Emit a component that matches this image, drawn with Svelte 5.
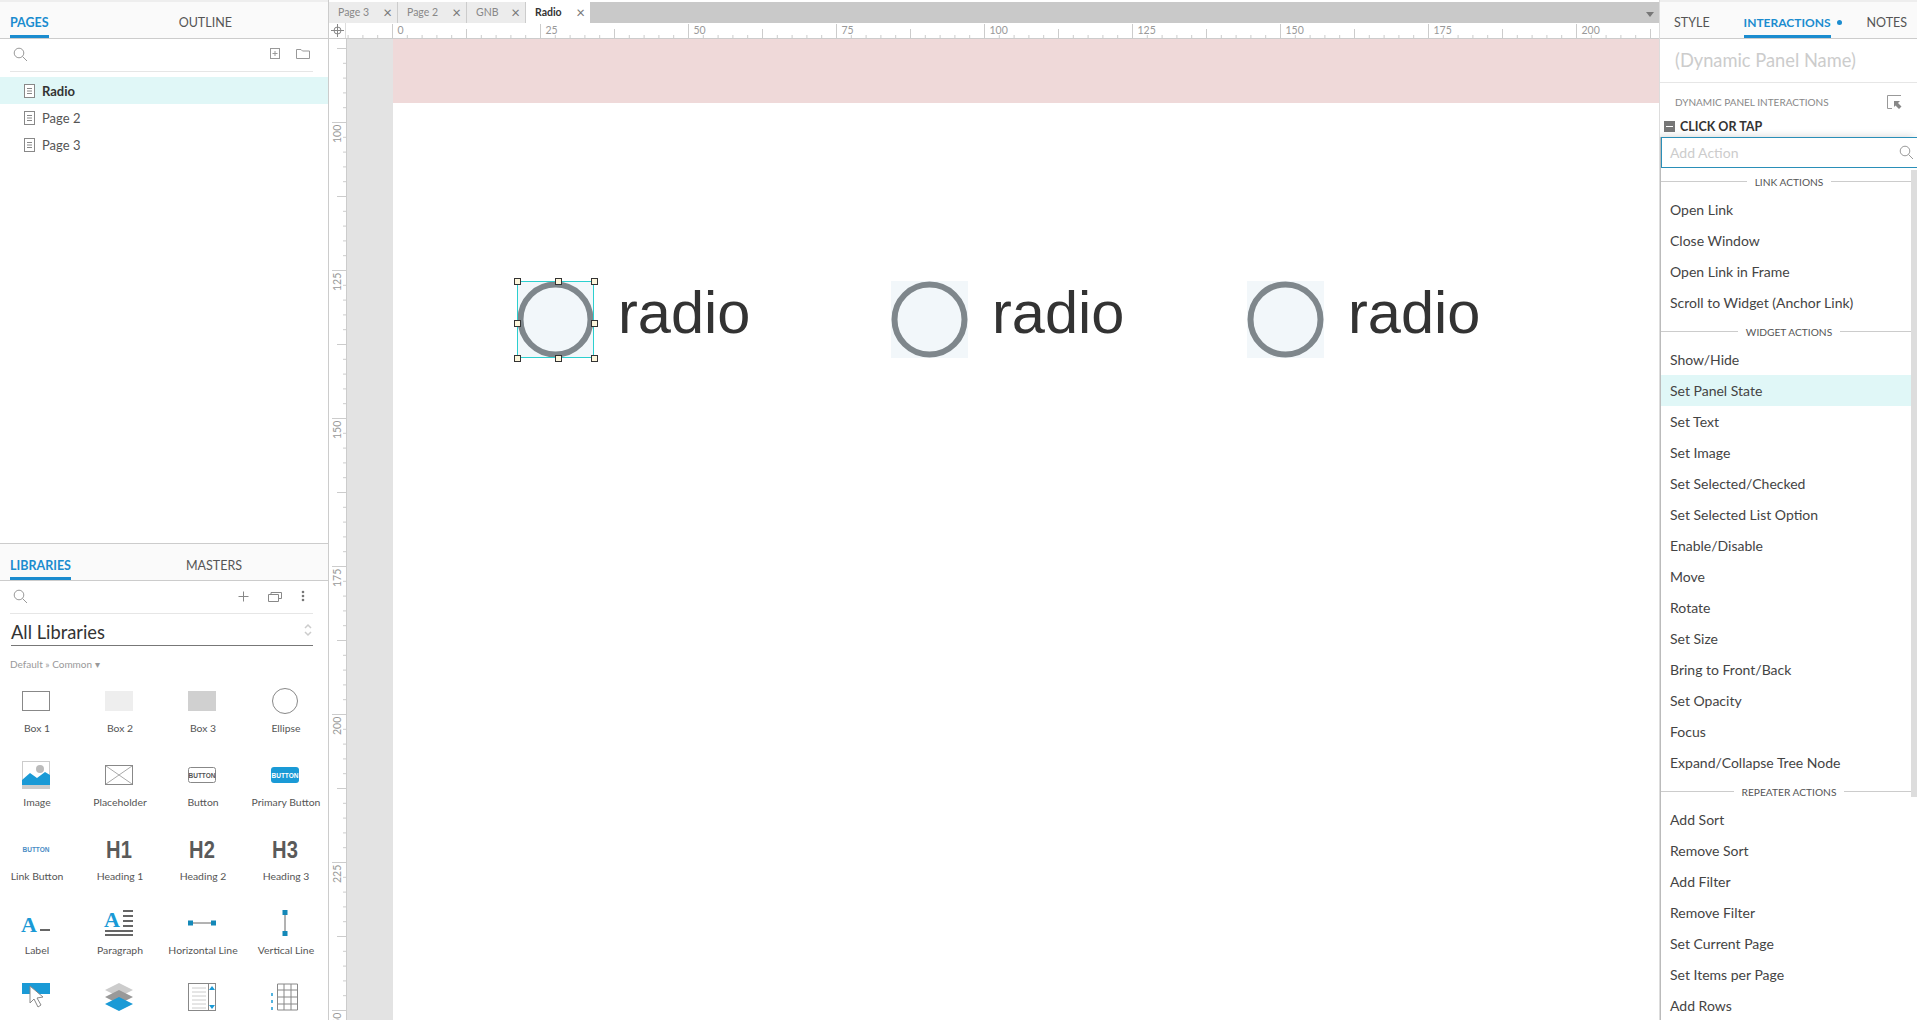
<script>
    const pages = ['Radio', 'Page 2', 'Page 3'];
    const docTabs = [
        { name: 'Page 3', width: 69 },
        { name: 'Page 2', width: 69 },
        { name: 'GNB', width: 59 },
        { name: 'Radio', width: 64, active: true }
    ];

    const widgets = [
        { left: 124, selected: true },
        { left: 498 },
        { left: 854 }
    ];
    const handles = [
        [0, 0], [53, 0], [100, 0],
        [0, 55], [100, 55],
        [0, 100], [53, 100], [100, 100]
    ];

    // last row sits under the fold, its captions are not visible
    const library = [
        ['box1', 'Box 1'], ['box2', 'Box 2'], ['box3', 'Box 3'], ['ellipse', 'Ellipse'],
        ['image', 'Image'], ['placeholder', 'Placeholder'], ['button', 'Button'], ['primary', 'Primary Button'],
        ['link', 'Link Button'], ['h1', 'Heading 1'], ['h2', 'Heading 2'], ['h3', 'Heading 3'],
        ['label', 'Label'], ['paragraph', 'Paragraph'], ['hline', 'Horizontal Line'], ['vline', 'Vertical Line'],
        ['hotspot', ''], ['panel', ''], ['frame', ''], ['repeater', '']
    ];

    const actions = [
        { title: 'LINK ACTIONS', items: ['Open Link', 'Close Window', 'Open Link in Frame', 'Scroll to Widget (Anchor Link)'] },
        { title: 'WIDGET ACTIONS', items: ['Show/Hide', 'Set Panel State', 'Set Text', 'Set Image', 'Set Selected/Checked', 'Set Selected List Option', 'Enable/Disable', 'Move', 'Rotate', 'Set Size', 'Bring to Front/Back', 'Set Opacity', 'Focus', 'Expand/Collapse Tree Node'] },
        { title: 'REPEATER ACTIONS', items: ['Add Sort', 'Remove Sort', 'Add Filter', 'Remove Filter', 'Set Current Page', 'Set Items per Page', 'Add Rows'] }
    ];

    // ruler: 148px per 25 units, one tick every 2.5 units
    const step = 14.8;
    const hTicks = Array.from({ length: 92 }, (_, i) => i - 3);
    const vTicks = Array.from({ length: 70 }, (_, i) => i - 5);
    const tickLen = (i) => (i % 10 === 0 ? 14 : i % 5 === 0 ? 9 : 3);
</script>

{#snippet search()}
    <svg class="search" width="15" height="15" viewBox="0 0 15 15">
        <circle cx="6" cy="6" r="4.8" fill="none" stroke="#999" />
        <path d="M9.5 9.5 L14 14" stroke="#999" fill="none" />
    </svg>
{/snippet}

{#snippet pageIcon()}
    <svg width="11" height="14" viewBox="0 0 11 14">
        <rect x="0.5" y="0.5" width="10" height="13" fill="#fff" stroke="#888" />
        <path d="M3 4.5 H8 M3 7 H8 M3 9.5 H8" stroke="#888" />
    </svg>
{/snippet}

{#snippet widgetIcon(kind)}
    <svg width="44" height="34" viewBox="0 0 44 34">
        {#if kind === 'box1'}
            <rect x="7.5" y="7.5" width="27" height="19" fill="#fff" stroke="#888" />
        {:else if kind === 'box2'}
            <rect x="7" y="7" width="28" height="20" fill="#eee" />
        {:else if kind === 'box3'}
            <rect x="7" y="7" width="28" height="20" fill="#d0d0d0" />
        {:else if kind === 'ellipse'}
            <circle cx="21" cy="17" r="12.5" fill="#fff" stroke="#888" />
        {:else if kind === 'image'}
            <rect x="7.5" y="3.5" width="27" height="27" fill="#fff" stroke="#ccc" />
            <circle cx="25" cy="11" r="4" fill="#bbb" />
            <path d="M7 22 L15 15 L22 20 L30 14 L35 17 V27 H7 Z" fill="#1a9ad6" />
            <rect x="7" y="27" width="28" height="4" fill="#ccc" />
        {:else if kind === 'placeholder'}
            <rect x="7.5" y="7.5" width="27" height="19" fill="#fff" stroke="#888" />
            <path d="M8 8 L34 26 M34 8 L8 26" stroke="#aaa" />
        {:else if kind === 'button'}
            <rect x="7.5" y="9.5" width="27" height="15" rx="2" fill="#fff" stroke="#888" />
            <text x="21" y="19.5" text-anchor="middle" class="btn-text" fill="#555">BUTTON</text>
        {:else if kind === 'primary'}
            <rect x="7" y="9" width="28" height="16" rx="3" fill="#1a9ad6" />
            <text x="21" y="19.5" text-anchor="middle" class="btn-text" fill="#fff">BUTTON</text>
        {:else if kind === 'link'}
            <text x="21" y="19.5" text-anchor="middle" class="btn-text" fill="#4a8cc4">BUTTON</text>
        {:else if kind === 'h1' || kind === 'h2' || kind === 'h3'}
            <text transform="translate(21,26) scale(0.84,1)" text-anchor="middle" class="heading">{kind.toUpperCase()}</text>
        {:else if kind === 'label'}
            <text x="6" y="26" class="serif-a">A</text>
            <rect x="25" y="23" width="10" height="2" fill="#666" />
        {:else if kind === 'paragraph'}
            <text x="6" y="21" class="serif-a">A</text>
            <path d="M25 5 H35 M25 10 H35 M25 15 H35 M25 20 H35 M7 25 H35 M7 29 H35" stroke="#666" stroke-width="2" />
        {:else if kind === 'hline'}
            <path d="M10 17 H32" stroke="#666" />
            <rect x="7" y="14.5" width="5" height="5" fill="#1488b8" />
            <rect x="30" y="14.5" width="5" height="5" fill="#1488b8" />
        {:else if kind === 'vline'}
            <path d="M21 6 V28" stroke="#666" />
            <rect x="18.5" y="4" width="5" height="5" fill="#1488b8" />
            <rect x="18.5" y="25" width="5" height="5" fill="#1488b8" />
        {:else if kind === 'hotspot'}
            <rect x="7" y="3" width="28" height="11" fill="#1a9ad6" />
            <path d="M15 6 V23 L19 19 L23 27 L26 25 L22 18 L28 17 Z" fill="#fff" stroke="#888" />
        {:else if kind === 'panel'}
            <path d="M21 3 L35 10 L21 17 L7 10 Z" fill="#ccc" />
            <path d="M21 10 L35 17 L21 24 L7 17 Z" fill="#999" />
            <path d="M21 17 L35 24 L21 31 L7 24 Z" fill="#1a9ad6" />
        {:else if kind === 'frame'}
            <rect x="7.5" y="3.5" width="27" height="27" fill="#fff" stroke="#888" />
            <path d="M11 8 H25 M11 12 H25 M11 16 H25 M11 20 H25 M11 24 H25 M11 28 H25" stroke="#ccc" />
            <path d="M27.5 4 V30" stroke="#888" />
            <path d="M31 6 L34 10 H28 Z M31 29 L34 25 H28 Z" fill="#1a9ad6" />
        {:else if kind === 'repeater'}
            <path d="M13.5 4 H33.5 V30 H13.5 Z M20 4 V30 M27 4 V30 M13.5 10 H33.5 M13.5 17 H33.5 M13.5 24 H33.5" fill="none" stroke="#888" />
            <path d="M8 13 V16 M8 20 V23 M8 27 V30" stroke="#1a9ad6" stroke-width="1.5" />
        {/if}
    </svg>
{/snippet}

<div class="app">
    <aside class="left">
        <section class="pages">
            <div class="panel-tabs">
                <span class="panel-tab on">PAGES</span>
                <span class="panel-tab outline">OUTLINE</span>
            </div>
            <div class="tool-row page-tools">
                {@render search()}
                <span class="spring"></span>
                <svg width="11" height="12" viewBox="0 0 11 12">
                    <rect x="0.5" y="0.5" width="9" height="10" fill="none" stroke="#999" />
                    <path d="M5 3 V8 M2.500 5.500 H7.500" stroke="#999" />
                </svg>
                <svg class="folder" width="14" height="12" viewBox="0 0 14 12">
                    <path d="M0.500 10.500 V1.500 H5 L6.500 3 H13.500 V10.500 Z" fill="none" stroke="#999" />
                </svg>
            </div>
            <ul class="page-list">
                {#each pages as page, i}
                    <li class:current={i === 0}>
                        {@render pageIcon()}
                        {page}
                    </li>
                {/each}
            </ul>
        </section>

        <section class="libraries">
            <div class="panel-tabs">
                <span class="panel-tab on">LIBRARIES</span>
                <span class="panel-tab masters">MASTERS</span>
            </div>
            <div class="tool-row lib-tools">
                {@render search()}
                <span class="spring"></span>
                <svg width="11" height="11" viewBox="0 0 11 11">
                    <path d="M5.500 0.500 V10.500 M0.500 5.500 H10.500" stroke="#888" />
                </svg>
                <svg class="stack" width="14" height="12" viewBox="0 0 14 12">
                    <path d="M0.500 4.500 H10.500 V11.500 H0.500 Z M3 4 V2.500 H13.500 V8.500 H11" fill="none" stroke="#888" />
                </svg>
                <svg class="dots" width="4" height="12" viewBox="0 0 4 12">
                    <circle cx="2" cy="2" r="1.300" fill="#777" />
                    <circle cx="2" cy="6" r="1.300" fill="#777" />
                    <circle cx="2" cy="10" r="1.300" fill="#777" />
                </svg>
            </div>
            <div class="lib-select">
                <span>All Libraries</span>
                <svg width="8" height="14" viewBox="0 0 8 14">
                    <path d="M1 5 L4 2 L7 5 M1 9 L4 12 L7 9" fill="none" stroke="#ccc" stroke-width="1.500" />
                </svg>
            </div>
            <div class="crumb">Default » Common ▾</div>
            <div class="lib-grid">
                {#each library as [kind, name]}
                    <div class="lib-item">
                        {@render widgetIcon(kind)}
                        {#if name}<span>{name}</span>{/if}
                    </div>
                {/each}
            </div>
        </section>
    </aside>

    <main class="center">
        <div class="doc-tabs">
            {#each docTabs as tab}
                <div class="doc-tab" class:active={tab.active} style="width: {tab.width}px">
                    <span>{tab.name}</span>
                    <span class="close">×</span>
                </div>
            {/each}
            <span class="tabs-menu"></span>
        </div>
        <div class="h-ruler-row">
            <div class="corner">
                <svg width="13" height="13" viewBox="0 0 13 13">
                    <circle cx="6.500" cy="6.500" r="3.500" fill="none" stroke="#888" />
                    <path d="M6.500 0 V13 M0 6.500 H13" stroke="#888" />
                </svg>
            </div>
            <svg class="h-ruler" width="1313" height="15">
                {#each hTicks as i}
                    <path d="M{46.500 + i * step} 15 v{-tickLen(i)}" class="tick" />
                    {#if i >= 0 && i % 10 === 0}
                        <text x={51.5 + i * step} y="11" class="ruler-num">{i * 2.5}</text>
                    {/if}
                {/each}
            </svg>
        </div>
        <div class="work">
            <svg class="v-ruler" width="17" height="981">
                {#each vTicks as i}
                    <path d="M17 {83.500 + i * step} h{-tickLen(i)}" class="tick" />
                    {#if i >= 0 && i % 10 === 0}
                        <text transform="translate(12,{104 + i * step}) rotate(-90)" class="ruler-num">{100 + i * 2.5}</text>
                    {/if}
                {/each}
            </svg>
            <div class="gutter"></div>
            <div class="artboard">
                <div class="band"></div>
                {#each widgets as w}
                    <div class="widget" style="left: {w.left}px">
                        <div class="radio" class:selected={w.selected}>
                            <svg width="77" height="77" viewBox="0 0 77 77">
                                <circle cx="38.5" cy="38.5" r="35" fill="none" stroke="#7f878c" stroke-width="6" />
                            </svg>
                            {#if w.selected}
                                {#each handles as [x, y]}
                                    <i class="handle" style="left: {x}%; top: {y}%"></i>
                                {/each}
                            {/if}
                        </div>
                        <span class="radio-label">radio</span>
                    </div>
                {/each}
            </div>
        </div>
    </main>

    <aside class="right">
        <div class="panel-tabs right-tabs">
            <span class="panel-tab">STYLE</span>
            <span class="panel-tab on">INTERACTIONS<i class="dot"></i></span>
            <span class="panel-tab notes">NOTES</span>
        </div>
        <div class="widget-name">(Dynamic Panel Name)</div>
        <div class="section-title">
            DYNAMIC PANEL INTERACTIONS
            <svg width="15" height="14" viewBox="0 0 15 14">
                <path d="M14 0.500 H0.500 V13.500 H5" fill="none" stroke="#999" />
                <path d="M7 6 H13 L11 8 L14.500 11.500 L12 14 L8.500 10.500 L7 12 Z" fill="#888" />
            </svg>
        </div>
        <div class="event">
            <span class="minus"></span>
            CLICK OR TAP
        </div>

        <div class="action-menu">
            <div class="action-input">
                <span>Add Action</span>
                {@render search()}
            </div>
            <div class="action-list">
                {#each actions as group}
                    <div class="group-title"><span>{group.title}</span></div>
                    {#each group.items as item}
                        <div class="action" class:hover={item === 'Set Panel State'}>{item}</div>
                    {/each}
                {/each}
                <div class="scroll-thumb"></div>
            </div>
        </div>
    </aside>
</div>

<style>
    :global(body) {
        margin: 0;
        background: #fff;
        overflow: hidden;
    }
    .app {
        display: grid;
        grid-template-columns: 329px 1fr 258px;
        height: 1020px;
        overflow: hidden;
        font-family: Lato, "Open Sans", sans-serif;
        color: #444;
    }

    /* left */
    .left {
        display: flex;
        flex-direction: column;
        border-right: 1px solid #ccc;
        overflow: hidden;
    }
    .pages {
        height: 543px;
        flex: none;
    }
    .libraries {
        border-top: 1px solid #ccc;
        flex: 1;
        overflow: hidden;
    }
    .panel-tabs {
        display: flex;
        height: 36px;
        background: #fafafa;
        border-bottom: 1px solid #ccc;
        border-top: 2px solid #eee;
    }
    .libraries .panel-tabs {
        height: 36px;
        border-top: 0;
    }
    .panel-tab {
        position: relative;
        font-size: 12.500px;
        line-height: 42px;
        height: 36px;
        color: #555;
        white-space: nowrap;
    }
    .libraries .panel-tab {
        line-height: 43px;
    }
    .panel-tab.on {
        color: #1b8ccf;
        font-weight: 700;
        box-shadow: inset 0 -3px 0 #1b8ccf;
    }
    .left .panel-tab.on {
        margin-left: 10px;
    }
    .outline {
        margin-left: 130px;
    }
    .masters {
        margin-left: 115px;
    }
    .tool-row {
        display: flex;
        align-items: center;
        height: 30px;
        margin: 0 15px 0 10px;
        padding: 0 3px 2px;
        border-bottom: 1px solid #e6e6e6;
    }
    .page-tools {
        gap: 15px;
    }
    .lib-tools {
        gap: 19px;
        padding-right: 8px;
    }
    .spring {
        flex: 1;
    }
    .search {
        flex: none;
    }
    .page-list {
        list-style: none;
        margin: 5px 0 0;
        padding: 0;
    }
    .page-list li {
        display: flex;
        align-items: center;
        gap: 7px;
        height: 27px;
        padding-left: 24px;
        font-size: 13px;
        color: #555;
    }
    .page-list li.current {
        background: #e0f7f7;
        color: #333;
        font-weight: 700;
    }
    .lib-select {
        display: flex;
        align-items: center;
        justify-content: space-between;
        height: 31px;
        margin: 0 15px 0 11px;
        border-bottom: 1px solid #777;
        font-size: 18.300px;
        color: #333;
    }
    .lib-select span {
        padding-top: 4px;
    }
    .lib-select svg {
        margin-right: 1px;
    }
    .crumb {
        margin: 11px 0 0 10px;
        font-size: 10px;
        line-height: 14px;
        color: #999;
    }
    .lib-grid {
        display: grid;
        grid-template-columns: repeat(4, 74px);
        column-gap: 9px;
        row-gap: 23px;
        grid-auto-rows: 51px;
        margin-top: 13px;
    }
    .lib-item {
        display: flex;
        flex-direction: column;
        align-items: center;
        gap: 3px;
    }
    .lib-item span {
        font-size: 10.400px;
        line-height: 14px;
        color: #555;
        white-space: nowrap;
    }
    .btn-text {
        font: 700 6.500px "Liberation Sans", sans-serif;
    }
    .heading {
        font: 700 24px "Liberation Sans", sans-serif;
        fill: #5a5a5a;
    }
    .serif-a {
        font: 700 22px "Liberation Serif", serif;
        fill: #1a9ad6;
    }

    /* center */
    .center {
        min-width: 0;
        display: flex;
        flex-direction: column;
        overflow: hidden;
    }
    .doc-tabs {
        display: flex;
        height: 21px;
        margin-top: 2px;
        background: #c9c9c9;
        flex: none;
    }
    .doc-tab {
        display: flex;
        align-items: center;
        justify-content: space-between;
        box-sizing: border-box;
        padding: 0 5px 1px 9px;
        background: #ececec;
        border-right: 1px solid #ccc;
        font-size: 10.500px;
        color: #888;
    }
    .doc-tab.active {
        background: #fff;
        color: #333;
        font-weight: 700;
        border-right: 0;
    }
    .close {
        font-size: 15px;
        font-weight: 400;
        color: #777;
    }
    .tabs-menu {
        margin: 10px 5px 0 auto;
        border: 4px solid transparent;
        border-top: 5px solid #777;
        height: 0;
    }
    .h-ruler-row {
        display: flex;
        height: 15px;
        flex: none;
        border-bottom: 1px solid #ccc;
    }
    .corner {
        width: 16px;
        display: flex;
        align-items: center;
        justify-content: center;
        border-right: 1px solid #ddd;
        flex: none;
    }
    .h-ruler, .v-ruler {
        display: block;
        flex: none;
    }
    .tick {
        stroke: #ccc;
        fill: none;
    }
    .ruler-num {
        font: 10.500px Lato, sans-serif;
        fill: #999;
    }
    .work {
        display: flex;
        flex: 1;
        min-height: 0;
    }
    .v-ruler {
        border-right: 1px solid #ccc;
    }
    .gutter {
        width: 46px;
        flex: none;
        background: #e3e3e3;
    }
    .artboard {
        position: relative;
        flex: 1;
        background: #fff;
    }
    .band {
        height: 64px;
        background: #efd9d9;
    }
    .widget {
        position: absolute;
        top: 242px;
        display: flex;
        gap: 24px;
        align-items: flex-start;
    }
    .radio {
        position: relative;
        width: 77px;
        height: 77px;
        background: #f2f7fa;
    }
    .radio svg {
        display: block;
    }
    .radio.selected {
        outline: 1px solid #2ccfcf;
        outline-offset: -1px;
    }
    .handle {
        position: absolute;
        box-sizing: border-box;
        width: 7px;
        height: 7px;
        margin: -3px 0 0 -3px;
        background: #fdf6dc;
        border: 1px solid #333;
    }
    .radio-label {
        margin-top: -3px;
        font: 59.500px "Liberation Sans", sans-serif;
        color: #333;
    }

    /* right */
    .right {
        position: relative;
        border-left: 1px solid #ddd;
        overflow: hidden;
    }
    .right-tabs {
        padding-left: 14px;
        gap: 34px;
    }
    .right-tabs .on {
        font-size: 12px;
    }
    .notes {
        margin-left: 2px;
    }
    .dot {
        position: absolute;
        left: 93px;
        top: 18px;
        width: 5px;
        height: 5px;
        border-radius: 50%;
        background: #1b8ccf;
    }
    .widget-name {
        height: 43px;
        padding-left: 15px;
        font-size: 18.300px;
        line-height: 42px;
        color: #ccc;
        border-bottom: 1px solid #e6e6e6;
    }
    .section-title {
        display: flex;
        align-items: center;
        justify-content: space-between;
        height: 38px;
        padding: 0 15px 0 15px;
        font-size: 10px;
        color: #888;
    }
    .event {
        display: flex;
        align-items: center;
        gap: 5px;
        padding-left: 4px;
        font-size: 12.500px;
        font-weight: 700;
        line-height: 11px;
        color: #333;
    }
    .minus {
        position: relative;
        width: 11px;
        height: 11px;
        background: #777;
    }
    .minus::after {
        content: '';
        position: absolute;
        left: 2px;
        right: 2px;
        top: 5px;
        height: 1px;
        background: #fff;
    }
    .action-menu {
        position: absolute;
        left: 0;
        right: 0;
        top: 137px;
        bottom: 0;
        background: #fff;
        border-left: 1px solid #bbb;
        box-shadow: -3px 0 8px rgba(0, 0, 0, 0.18);
    }
    .action-input {
        display: flex;
        align-items: center;
        justify-content: space-between;
        box-sizing: border-box;
        height: 31px;
        padding: 0 3px 1px 8px;
        border: 1.500px solid #2a8fb8;
        border-right: 0;
        font-size: 14px;
        color: #ccc;
    }
    .action-list {
        position: relative;
    }
    .group-title {
        display: flex;
        align-items: center;
        gap: 8px;
        height: 26px;
        padding-top: 1px;
        box-sizing: border-box;
        font-size: 10.200px;
        color: #555;
    }
    .group-title::before, .group-title::after {
        content: '';
        flex: 1;
        height: 1px;
        background: #ccc;
    }
    .action {
        height: 31px;
        line-height: 31px;
        margin-right: 6px;
        padding-left: 9px;
        font-size: 14px;
        color: #444;
        white-space: nowrap;
    }
    .action.hover {
        background: #e0f7f7;
    }
    .scroll-thumb {
        position: absolute;
        right: 0;
        top: 2px;
        width: 6px;
        height: 627px;
        background: #ddd;
    }
</style>
